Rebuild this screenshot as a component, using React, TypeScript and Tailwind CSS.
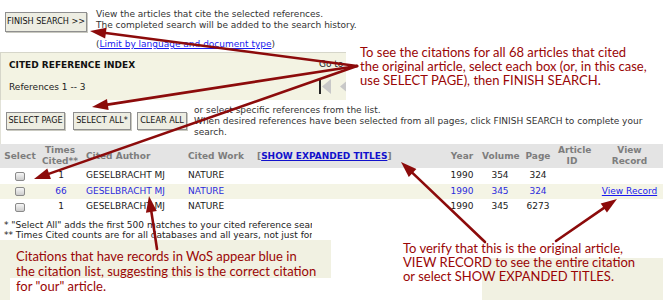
import React from 'react';

type ArrowProps = { x1: number; y1: number; x2: number; y2: number };

// annotation arrow: line plus filled head at (x2, y2)
function Arrow({ x1, y1, x2, y2 }: ArrowProps) {
  const dx = x2 - x1;
  const dy = y2 - y1;
  const len = Math.hypot(dx, dy);
  const ux = dx / len;
  const uy = dy / len;
  const L = 16;
  const W = 5.5;
  const bx = x2 - ux * L;
  const by = y2 - uy * L;
  const pts = `${x2},${y2} ${bx - uy * W},${by + ux * W} ${bx + uy * W},${by - ux * W}`;
  return (
    <g>
      <line x1={x1} y1={y1} x2={bx + ux * 2} y2={by + uy * 2} stroke="#8c0b0b" strokeWidth={2.6} strokeLinecap="round" />
      <polygon points={pts} fill="#8c0b0b" />
    </g>
  );
}

function Btn({ children, className = '' }: { children: React.ReactNode; className?: string }) {
  return (
    <div
      className={`flex items-center justify-center border border-[#8f8f8f] bg-[#ededE2] text-[9px] text-[#111] font-['DejaVu_Sans_Condensed','DejaVu_Sans',sans-serif] font-stretch-condensed shadow-[1px_1px_0_#c9c9c0] whitespace-nowrap ${className}`}
    >
      {children}
    </div>
  );
}

function Checkbox() {
  return <div className="h-[9px] w-[10px] rounded-[2px] border border-[#8a8a8a] bg-gradient-to-b from-[#f6f6f6] to-[#cdcdcd]" />;
}

const grid = 'grid grid-cols-[40px_40px_103px_69px_190px_40px_36px_40px_28px_77px] items-center';

const rows = [
  { cited: '1', year: '1990', vol: '354', page: '324', blue: false, link: false, bg: 'bg-white', h: 'h-[16px]' },
  { cited: '66', year: '1990', vol: '345', page: '324', blue: true, link: true, bg: 'bg-[#f4f4e5]', h: 'h-[15px]' },
  { cited: '1', year: '1990', vol: '345', page: '6273', blue: false, link: false, bg: 'bg-white', h: 'h-[16px]' },
];

export default function App() {
  return (
    <div className="relative h-[300px] w-[663px] overflow-hidden bg-white font-['DejaVu_Sans',Verdana,sans-serif] text-[9px] text-[#222]">
      <div className="flex h-[300px] flex-col">
        {/* Finish search bar */}
        <div className="flex h-[52px] shrink-0">
          <div className="ml-[5px] mt-[12px]">
            <Btn className="h-[20px] w-[82px]">FINISH SEARCH &gt;&gt;</Btn>
          </div>
          <div className="ml-[9px] mt-[9px] whitespace-nowrap leading-[11px] text-[#333]">
            <p>View the articles that cite the selected references.</p>
            <p>The completed search will be added to the search history.</p>
            <p className="mt-[8px]">
              (<span className="text-[#1a1aee] underline">Limit by language and document type</span>)
            </p>
          </div>
        </div>

        {/* Cited reference index panel */}
        <div className="flex h-[48px] shrink-0 border-l border-t border-[#d6d6ca] bg-[#f3f3e3]">
          <div className="w-[318px] pl-[8px] pt-[7px] leading-[11px]">
            <p className="font-bold text-[#111]">CITED REFERENCE INDEX</p>
            <p className="mt-[11px]">References 1 -- 3</p>
          </div>
          <div className="pt-[6px] leading-[11px]">
            <p>Go to</p>
            <svg width="30" height="15" className="mt-[9px] block">
              <rect x="0" y="0" width="2" height="15" fill="#222" />
              <polygon points="3,7.5 12,0 12,15" fill="#c8c8c8" />
              <polygon points="21,7.5 30,0 30,15" fill="#c8c8c8" />
            </svg>
          </div>
        </div>

        {/* Selection buttons */}
        <div className="flex h-[44px] shrink-0 border-l border-[#e2e2d8]">
          <div className="flex pt-[12px]">
            <Btn className="ml-[5px] h-[18px] w-[59px]">SELECT PAGE</Btn>
            <Btn className="ml-[8px] h-[18px] w-[58px]">SELECT ALL*</Btn>
            <Btn className="ml-[6px] h-[18px] w-[50px]">CLEAR ALL</Btn>
          </div>
          <div className="ml-[7px] whitespace-nowrap pt-[5px] leading-[11px] text-[#333]">
            <p>or select specific references from the list.</p>
            <p>When desired references have been selected from all pages, click FINISH SEARCH to complete your</p>
            <p>search.</p>
          </div>
        </div>

        {/* Table */}
        <div className={`${grid} h-[24px] shrink-0 bg-[#e4e4e4] font-bold leading-[11px] text-[#7d7d7d]`}>
          <div className="text-center">Select</div>
          <div className="text-center">
            Times
            <br />
            Cited**
          </div>
          <div className="pl-[6px] whitespace-nowrap">Cited Author</div>
          <div className="pl-[5px] whitespace-nowrap">Cited Work</div>
          <div className="pl-[5px] whitespace-nowrap">
            [<span className="text-[#1111cc] underline">SHOW EXPANDED TITLES</span>]
          </div>
          <div className="text-center">Year</div>
          <div className="text-center">Volume</div>
          <div className="text-center">Page</div>
          <div className="text-center whitespace-nowrap">
            Article
            <br />
            ID
          </div>
          <div className="pl-[10px] text-center">
            View
            <br />
            Record
          </div>
        </div>
        {rows.map((r, i) => (
          <div key={i} className={`${grid} ${r.h} ${r.bg} shrink-0 whitespace-nowrap ${r.blue ? 'text-[#2b2bdc]' : 'text-[#1a1a1a]'}`}>
            <div className="flex justify-center">
              <Checkbox />
            </div>
            <div className="pl-[2px] text-center">{r.cited}</div>
            <div className="pl-[6px]">GESELBRACHT MJ</div>
            <div className="pl-[5px]">NATURE</div>
            <div />
            <div className="text-center">{r.year}</div>
            <div className="text-center">{r.vol}</div>
            <div className="text-center">{r.page}</div>
            <div />
            <div className="pl-[10px] text-center">
              {r.link && <span className="text-[#1a1aee] underline">View Record</span>}
            </div>
          </div>
        ))}

        {/* Footnotes */}
        <div className="h-[25px] w-[312px] shrink-0 overflow-hidden whitespace-nowrap pl-[4px] pt-[5px] leading-[10px] text-[#222]">
          <p>* "Select All" adds the first 500 matches to your cited reference search.</p>
          <p>** Times Cited counts are for all databases and all years, not just for the current database.</p>
        </div>

        <div className="flex-1 bg-[#f1f1e2]" />
      </div>

      {/* Annotation overlays */}
      <div className="absolute left-[346px] top-[36px] h-[64px] w-[317px] bg-white" />
      <div className="absolute left-[10px] top-[278px] h-[22px] w-[472px] bg-white" />
      <div className="absolute left-[331px] top-[240px] h-[60px] w-[151px] bg-white" />
      <div className="absolute left-[331px] top-[240px] h-[18px] w-[332px] bg-white" />

      <div className="absolute left-[360px] top-[45px] whitespace-nowrap font-['Lato','Open_Sans',sans-serif] text-[13px] leading-[14px] text-[#9a0606]">
        <p>To see the citations for all 68 articles that cited</p>
        <p>the original article, select each box (or, in this case,</p>
        <p>use SELECT PAGE), then FINISH SEARCH.</p>
      </div>
      <div className="absolute left-[16px] top-[249px] whitespace-nowrap font-['Lato','Open_Sans',sans-serif] text-[13px] leading-[15px] text-[#9a0606]">
        <p>Citations that have records in WoS appear blue in</p>
        <p>the citation list, suggesting this is the correct citation</p>
        <p>for "our" article.</p>
      </div>
      <div className="absolute left-[403px] top-[241px] whitespace-nowrap font-['Lato','Open_Sans',sans-serif] text-[13px] leading-[14px] text-[#9a0606]">
        <p>To verify that this is the original article,</p>
        <p>VIEW RECORD to see the entire citation</p>
        <p>or select SHOW EXPANDED TITLES.</p>
      </div>

      <svg className="pointer-events-none absolute left-0 top-0" width="663" height="300">
        <Arrow x1={357} y1={66} x2={90} y2={31} />
        <Arrow x1={357} y1={66} x2={92} y2={107} />
        <Arrow x1={357} y1={66} x2={34} y2={179} />
        <Arrow x1={157} y1={249} x2={149} y2={196} />
        <Arrow x1={485} y1={242} x2={401} y2={162} />
        <Arrow x1={556} y1={241} x2={617} y2={199} />
      </svg>
    </div>
  );
}
